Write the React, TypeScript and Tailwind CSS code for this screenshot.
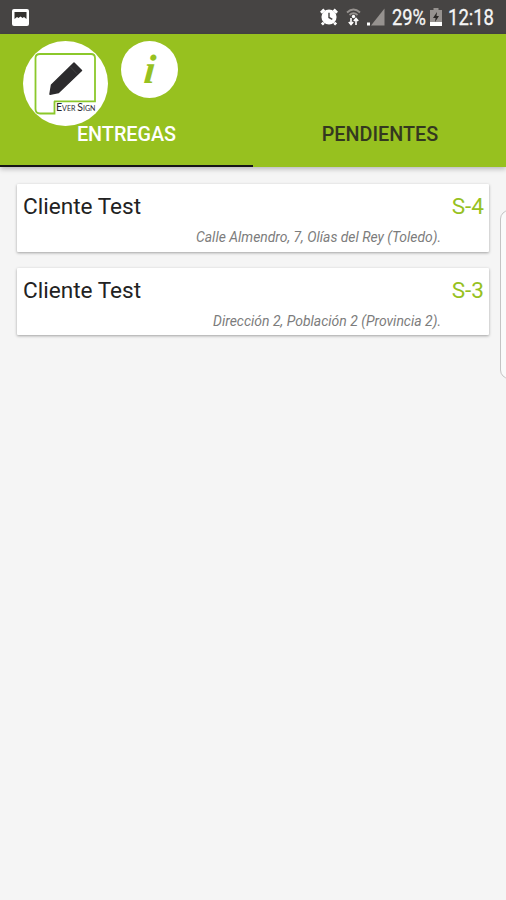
const deliveries = [
  { client: "Cliente Test", code: "S-4", address: "Calle Almendro, 7, Olías del Rey (Toledo).", width: 245 },
  { client: "Cliente Test", code: "S-3", address: "Dirección 2, Población 2 (Provincia 2).", width: 228 },
];

function StatusBar() {
  return (
    <div className="flex h-[34px] items-center justify-between bg-[#464443] pl-3 pr-3">
      <svg width="17" height="17" viewBox="0 0 17 17">
        <rect width="17" height="17" rx="2" fill="#fff" />
        <path d="M2.500 3h12v7l-2.500-2-1.500 1-2-1.500-2 1.500-1.500-1-2.500 2z" fill="#33312f" />
      </svg>
      <div className="flex items-center text-[#f5f5f5]">
        <svg className="mr-[8px]" width="18" height="18" viewBox="0 0 19 18">
          <circle cx="9.500" cy="9" r="8" fill="#fff" />
          <path d="M1 4.500 4.500 1M14.500 1 18 4.500M4 15l-2 2M15 15l2 2" stroke="#fff" strokeWidth="3" />
          <path d="M9.500 4.500V9.500l3.500 2" fill="none" stroke="#464443" strokeWidth="1.500" />
        </svg>
        <svg className="mr-[6px]" width="15" height="18" viewBox="0 0 15 18">
          <g fill="none" stroke="#96928f" strokeWidth="1.800">
            <path d="M1 4.500Q7.500-1.500 14 4.500" />
            <path d="M3.500 7Q7.500 3.500 11.500 7" />
          </g>
          <circle cx="7.500" cy="8.500" r="1.700" fill="#fff" />
          <path d="M5 10v6.500M2.800 14 5 16.500 7.200 14M10 17v-6M7.800 13 10 10.500 12.200 13" fill="none" stroke="#fff" strokeWidth="1.600" />
        </svg>
        <svg className="mr-[7px]" width="18" height="18" viewBox="0 0 18 18">
          <path d="M17.500.500v17H4z" fill="#96928f" />
          <rect x="0" y="14.500" width="3" height="3" fill="#fff" />
        </svg>
        <svg width="35" height="30" className="mr-[3px] overflow-visible">
          <text x="0" y="23" textLength="34" lengthAdjust="spacingAndGlyphs" fontSize="21.500" fill="#f5f5f5" stroke="#f5f5f5" strokeWidth=".3" fontFamily="Roboto, sans-serif">29%</text>
        </svg>
        <svg className="mr-[6px]" width="12" height="18" viewBox="0 0 12 18">
          <path d="M3.500 0h5v2H12v16H0V2h3.500z" fill="#96928f" />
          <path d="M0 14h12v4H0z" fill="#fff" />
          <path d="M7 4 3 10h2.600L5 14l4-6H6.500z" fill="#292725" />
        </svg>
        <svg width="47" height="30" className="-mr-px overflow-visible">
          <text x="0" y="23" textLength="46" lengthAdjust="spacingAndGlyphs" fontSize="21.500" fill="#f5f5f5" stroke="#f5f5f5" strokeWidth=".3" fontFamily="Roboto, sans-serif">12:18</text>
        </svg>
      </div>
    </div>
  );
}

function Logo() {
  return (
    <svg className="shrink-0" width="85" height="85" viewBox="0 0 85 85">
      <circle cx="42.500" cy="42.500" r="42.500" fill="#fff" />
      <path d="M31 60.300H72V17q0-4-4-4H17q-4.500 0-4.500 4v51q0 4.500 4.500 4.500h14.500V60.300" fill="none" stroke="#8bc82b" strokeWidth="1.800" />
      <path d="M51 22 58.500 29.500 35.500 51.500 27 53.200 28.500 44z" fill="#2c2b2d" stroke="#2c2b2d" strokeWidth="1.500" strokeLinejoin="round" />
      <path d="m47.500 26 6.500 6.800" stroke="#555" strokeWidth=".5" />
      <text x="33" y="69.500" textLength="39.500" lengthAdjust="spacingAndGlyphs" fontFamily="Lato, sans-serif" fill="#282830">
        <tspan fontSize="10.500">E</tspan><tspan fontSize="7">VER </tspan><tspan fontSize="10.500">S</tspan><tspan fontSize="7">IGN</tspan>
      </text>
    </svg>
  );
}

function Header() {
  return (
    <header className="relative z-10 flex h-[133px] flex-col bg-[#97c11f] shadow-[0_2px_5px_rgba(0,0,0,0.25)]">
      <div className="flex h-[67px] items-start gap-[13px] pl-[23px] pt-[7px]">
        <Logo />
        <svg className="shrink-0" width="57" height="57" viewBox="0 0 57 57">
          <circle cx="28.500" cy="28.500" r="28.500" fill="#fff" />
          <text transform="translate(22 42) skewX(-5)" fontFamily="'Liberation Serif', serif" fontStyle="italic" fontWeight="bold" fontSize="41" fill="#97c11f">i</text>
        </svg>
      </div>
      <nav className="relative grid flex-1 grid-cols-2 text-[19.800px] font-medium">
        <button className="border-b-2 border-[#161616] pt-[4px] text-white">ENTREGAS</button>
        <button className="border-b-2 border-transparent pt-[4px] pl-px text-[#34381f]">PENDIENTES</button>
      </nav>
    </header>
  );
}

export default function App() {
  return (
    <div className="relative h-[900px] w-[506px] overflow-hidden bg-[#f5f5f5] font-[Roboto,sans-serif]">
      <StatusBar />
      <Header />
      <main className="flex flex-col gap-[16px] px-[17px] pt-[17px]">
        {deliveries.map((d) => (
          <article key={d.code} className="h-[67.500px] rounded-[1px] bg-white pl-[6px] pr-[5px] pt-[8px] shadow-[0_1px_3px_rgba(0,0,0,0.35)]">
            <div className="flex h-[30px] items-center justify-between text-[22.600px] leading-[30px]">
              <h2 className="text-[#222]">{d.client}</h2>
              <span className="text-[#97c11f]">{d.code}</span>
            </div>
            <div className="flex justify-end pr-[43px]">
              <svg width={d.width} height="22" className="overflow-visible">
                <text x="0" y="19.500" textLength={d.width} lengthAdjust="spacingAndGlyphs" fontSize="13.800" fontStyle="italic" fill="#7c7c7c" fontFamily="Roboto, sans-serif">{d.address}</text>
              </svg>
            </div>
          </article>
        ))}
      </main>
      <div className="absolute left-[500px] top-[210px] h-[169px] w-[20px] rounded-[9px] border border-[#c4c4c4] bg-[#fafafa]" />
    </div>
  );
}
